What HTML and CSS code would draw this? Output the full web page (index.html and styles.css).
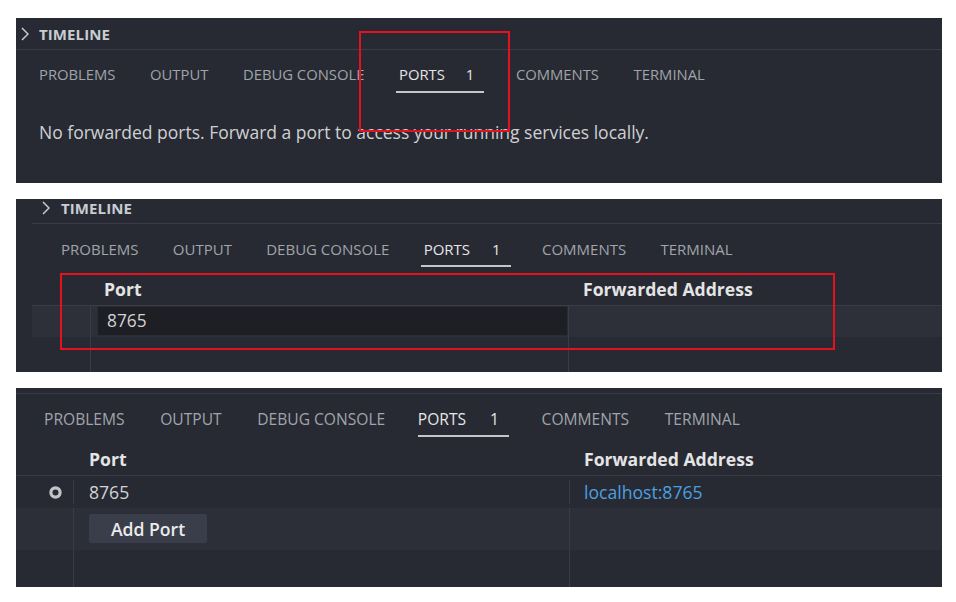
FILE: index.html
```html
<!DOCTYPE html>
<html lang="en">
<head>
<meta charset="utf-8">
<title>Ports panel</title>
<link rel="stylesheet" href="styles.css">
</head>
<body>
<main class="page">

  <section class="panel panel-empty">
    <div class="view-header">
      <svg class="chevron" viewBox="0 0 8 14" width="8" height="14"><polyline points="1,1 7,7 1,13"/></svg>
      <span class="view-title">TIMELINE</span>
    </div>
    <nav class="tabs">
      <span class="tab">PROBLEMS</span>
      <span class="tab">OUTPUT</span>
      <span class="tab">DEBUG CONSOLE</span>
      <span class="tab tab-active">PORTS<span class="badge">1</span></span>
      <span class="tab">COMMENTS</span>
      <span class="tab">TERMINAL</span>
    </nav>
    <p class="empty-msg">No forwarded ports. Forward a port to access your running services locally.</p>
    <div class="callout callout-tab"></div>
  </section>

  <section class="panel panel-input">
    <div class="view-header">
      <svg class="chevron" viewBox="0 0 8 14" width="8" height="14"><polyline points="1,1 7,7 1,13"/></svg>
      <span class="view-title">TIMELINE</span>
    </div>
    <nav class="tabs">
      <span class="tab">PROBLEMS</span>
      <span class="tab">OUTPUT</span>
      <span class="tab">DEBUG CONSOLE</span>
      <span class="tab tab-active">PORTS<span class="badge">1</span></span>
      <span class="tab">COMMENTS</span>
      <span class="tab">TERMINAL</span>
    </nav>
    <div class="table">
      <div class="trow thead">
        <div class="cell"></div>
        <div class="cell th th-port">Port</div>
        <div class="cell th th-addr">Forwarded Address</div>
      </div>
      <div class="trow tr-edit">
        <div class="cell c-icon"></div>
        <div class="cell c-port"><div class="port-input">8765</div></div>
        <div class="cell c-addr"></div>
      </div>
      <div class="trow tr-fill">
        <div class="cell c-icon"></div>
        <div class="cell c-port"></div>
        <div class="cell c-addr"></div>
      </div>
    </div>
    <div class="callout callout-table"></div>
  </section>

  <section class="panel panel-list">
    <div class="view-header"></div>
    <nav class="tabs">
      <span class="tab">PROBLEMS</span>
      <span class="tab">OUTPUT</span>
      <span class="tab">DEBUG CONSOLE</span>
      <span class="tab tab-active">PORTS<span class="badge">1</span></span>
      <span class="tab">COMMENTS</span>
      <span class="tab">TERMINAL</span>
    </nav>
    <div class="table">
      <div class="trow thead">
        <div class="cell"></div>
        <div class="cell th th-port">Port</div>
        <div class="cell th th-addr">Forwarded Address</div>
      </div>
      <div class="trow tr-port">
        <div class="cell c-icon"><svg class="ring" viewBox="0 0 13 13" width="13" height="13"><circle cx="6.5" cy="6.5" r="4.6"/></svg></div>
        <div class="cell c-port"><span class="port-num">8765</span></div>
        <div class="cell c-addr"><span class="addr-link">localhost:8765</span></div>
      </div>
      <div class="trow tr-add">
        <div class="cell c-icon"></div>
        <div class="cell c-port"><span class="btn">Add Port</span></div>
        <div class="cell c-addr"></div>
      </div>
      <div class="trow tr-fill">
        <div class="cell c-icon"></div>
        <div class="cell c-port"></div>
        <div class="cell c-addr"></div>
      </div>
    </div>
  </section>

</main>
</body>
</html>
```

FILE: styles.css
```css
* { box-sizing: border-box; }

html, body {
  margin: 0;
  padding: 0;
  background: #ffffff;
}

body {
  width: 956px;
  height: 602px;
  overflow: hidden;
  font-family: "Open Sans", "Noto Sans", sans-serif;
}

.page {
  display: flex;
  flex-direction: column;
  gap: 16px;
  padding: 18px 0 0 16px;
}

.panel {
  position: relative;
  display: flex;
  flex-direction: column;
  width: 926px;
  background: #272a32;
  overflow: hidden;
}

.panel-empty { height: 165px; }
.panel-input { height: 173px; }
.panel-list  { height: 199px; }

/* collapsed view header */
.view-header {
  flex: none;
  display: flex;
  align-items: center;
  gap: 10px;
  height: 32px;
  padding-left: 5px;
  border-bottom: 1px solid #3a3d45;
}

.panel-input .view-header {
  margin: -7px 0 0 16px;
  padding-left: 10px;
  gap: 11px;
}

.panel-list .view-header {
  margin-top: -26px;
}

.chevron {
  fill: none;
  stroke: #c8cacf;
  stroke-width: 1.5;
}

.view-title {
  font-size: 15px;
  font-weight: 700;
  line-height: 20px;
  color: #c9ccd2;
  letter-spacing: 0.1px;
}

/* panel tabs */
.tabs {
  flex: none;
  display: flex;
  gap: 34.6px;
  padding: 14px 0 0 23px;
  font-size: 14.8px;
  color: #a0a4ab;
}

.panel-input .tabs { padding-left: 45px; padding-top: 15px; font-size: 15px; gap: 34.3px; }
.panel-list .tabs  { padding-left: 28px; padding-top: 15px; font-size: 15.6px; gap: 35.6px; }

.tab {
  display: flex;
  line-height: 20px;
  padding-bottom: 7px;
  border-bottom: 2px solid transparent;
  white-space: nowrap;
}

.panel-input .tab, .panel-list .tab { padding-bottom: 6px; }

.tab-active {
  color: #e6e6e6;
  border-bottom-color: #c4c6ca;
  margin: 0 -3px;
}

.tabs .tab-active { padding-left: 3px; padding-right: 10px; }
.panel-input .tab-active { padding-right: 10px; margin-right: -3px; }
.panel-list .tab-active { padding-left: 0; padding-right: 10px; }

.badge {
  margin-left: 21px;
  color: #e6e6e6;
}

.panel-input .badge { margin-left: 22px; }
.panel-list .badge { margin-left: 24px; }

/* empty state */
.empty-msg {
  margin: 27px 0 0 23px;
  font-size: 17.5px;
  line-height: 24px;
  color: #cfd0d3;
}

/* ports table */
.table {
  flex: 1;
  display: flex;
  flex-direction: column;
}

.panel-input .table { margin-left: 16px; }

.trow {
  display: grid;
  grid-template-columns: 58px 478px 1fr;
}

.panel-list .trow { grid-template-columns: 57px 496px 1fr; }

.thead {
  height: 39px;
  padding-top: 10px;
  border-bottom: 1px solid #3a3d45;
}

.th {
  font-size: 17.6px;
  font-weight: 700;
  line-height: 24px;
  color: #e4e4e4;
}

.th-port { padding-left: 14px; }
.th-addr { padding-left: 15px; }
.panel-list .th-port { padding-left: 16px; }

.c-port, .c-addr {
  border-left: 1px solid #393c44;
}

.tr-edit {
  height: 31px;
  background: #2d3038;
}

.port-input {
  height: 30px;
  margin-left: 6px;
  padding-left: 9px;
  background: #1e1f24;
  border: 1px solid #2a2c32;
  border-radius: 2px;
  font-size: 17.3px;
  line-height: 28px;
  color: #d2d3d6;
}

.tr-fill { flex: 1; }

.tr-port {
  height: 32px;
  align-items: center;
  font-size: 17.6px;
  line-height: 24px;
}

.c-icon {
  display: flex;
  justify-content: flex-end;
  padding-right: 11px;
}

.ring {
  fill: none;
  stroke: #c2c3c6;
  stroke-width: 3.2;
}

.port-num {
  display: block;
  padding-left: 15px;
  color: #d2d3d6;
}

.addr-link {
  display: block;
  padding-left: 14px;
  color: #4ca0e0;
}

.tr-add {
  height: 42px;
  background: #2c2f37;
}

.btn {
  display: inline-flex;
  align-items: center;
  justify-content: center;
  width: 118px;
  height: 29px;
  margin: 6px 0 0 15px;
  background: #3a3e4a;
  border-radius: 2px;
  font-size: 17.6px;
  font-weight: 600;
  color: #ebebeb;
}

/* red annotation frames */
.callout {
  position: absolute;
  border: 2px solid #e5121d;
  pointer-events: none;
}

.callout-tab {
  left: 343px;
  top: 13px;
  width: 151px;
  height: 101px;
}

.callout-table {
  left: 44px;
  top: 74px;
  width: 775px;
  height: 77px;
}
```
